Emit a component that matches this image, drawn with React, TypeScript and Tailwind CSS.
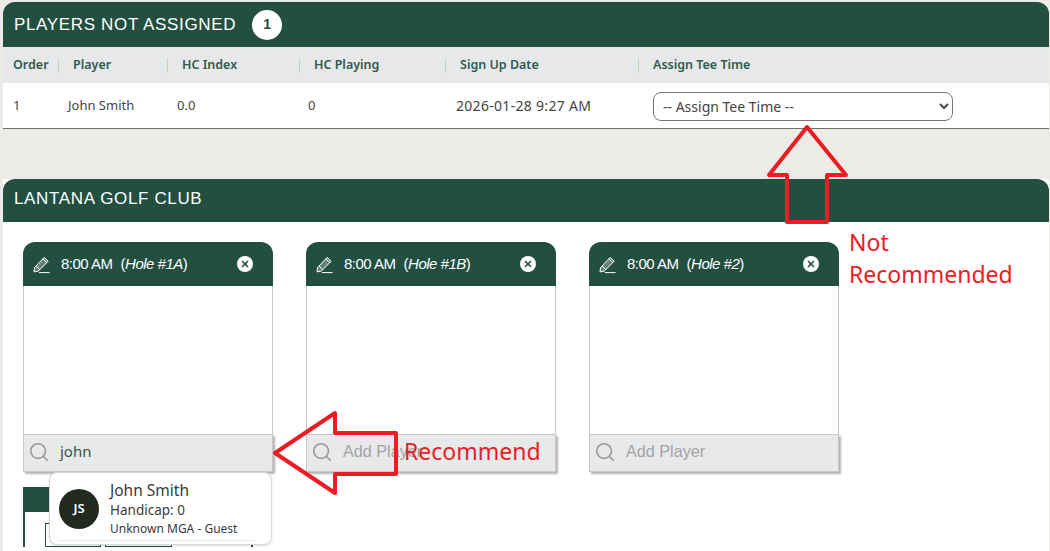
import { Search, X } from "lucide-react";

const body = { fontFamily: '"Noto Sans", sans-serif' };
const arial = { fontFamily: '"Liberation Sans", Arial, sans-serif' };

const columns = "grid grid-cols-[56px_109px_132px_146px_193px_1fr]";

function HeadCell({ label, last }: { label: string; last?: boolean }) {
  return (
    <div className={`flex h-[15px] items-center pl-[14px] ${last ? "" : "border-r border-[#c5d3bd]"}`}>
      {label}
    </div>
  );
}

function PencilIcon() {
  return (
    <svg width="19" height="19" viewBox="0 0 19 19" fill="none" stroke="#ffffff" strokeWidth="1" strokeLinejoin="round">
      <path d="M2.5 12.6 12.2 2.4l4 3.8-9.8 9.9-4.4.8z" fill="#ffffff" fillOpacity="0.3" />
      <path d="M4.2 11.2l3.6 3.5M10.8 3.9l3.9 3.7" />
      <path d="M6.8 17.6h10.8" />
    </svg>
  );
}

function TeeCard({ time, hole, query }: { time: string; hole: string; query?: string }) {
  return (
    <div className="relative w-[250px] shrink-0">
      <div className="flex h-11 items-center rounded-t-[12px] bg-[#224f40] pl-[9px] pr-[20px] text-white" style={arial}>
        <PencilIcon />
        <span className="ml-[10px] text-[15px] tracking-[-0.5px]">
          {time}
          <span className="ml-[8px]">
            (<i>{hole}</i>)
          </span>
        </span>
        <span className="ml-auto flex h-4 w-4 items-center justify-center rounded-full bg-white">
          <X size={10} strokeWidth={4} className="text-[#224f40]" />
        </span>
      </div>
      <div className="h-[148px] border-x border-[#c8c8c8] bg-white" />
      <div className="flex h-[38px] items-center border border-[#c8c8c8] bg-[#e8e9eb] pb-[3px] pl-[4px] shadow-[2px_2px_2px_rgba(0,0,0,0.3)]">
        <Search size={22} strokeWidth={1.8} className="text-[#9a9a9a]" />
        <span className={`ml-[10px] ${query ? "text-[15px] text-[#2f5a4c]" : "text-[16.2px] text-[#a3a3a3]"}`} style={query ? body : arial}>
          {query ?? "Add Player"}
        </span>
      </div>
    </div>
  );
}

export default function App() {
  return (
    <div className="relative h-[551px] w-[1050px] overflow-hidden bg-[#ecebe6] pl-[3px] pr-px pt-[2px]" style={body}>
      {/* players not assigned */}
      <section>
        <div className="flex h-[45px] items-center rounded-t-[12px] bg-[#224f40] pl-[11px] text-white">
          <h2 className="text-[17px] tracking-[0.65px]" style={arial}>PLAYERS NOT ASSIGNED</h2>
          <span className="ml-[16px] flex h-[30px] w-[30px] items-center justify-center rounded-full bg-white text-[14px] font-bold text-[#224f40]" style={arial}>
            1
          </span>
        </div>
        <div className={`${columns} h-9 items-center bg-[#e7e8ea] text-[12.5px] font-semibold text-[#2f5a4c]`}>
          <div className="flex h-[15px] items-center border-r border-[#c5d3bd] pl-[10px]">Order</div>
          <HeadCell label="Player" />
          <HeadCell label="HC Index" />
          <HeadCell label="HC Playing" />
          <HeadCell label="Sign Up Date" />
          <HeadCell label="Assign Tee Time" last />
        </div>
        <div className={`${columns} h-[46px] items-center border-b border-[#6f6f6a] bg-white pt-[2px] text-[13px] text-[#444]`}>
          <div className="pb-[2px] pl-[10px]">1</div>
          <div className="pb-[2px] pl-[9px]">John Smith</div>
          <div className="pb-[2px] pl-[9px]">0.0</div>
          <div className="pb-[2px] pl-2">0</div>
          <div className="whitespace-nowrap pb-[2px] pl-[10px] text-[14px] tracking-[0.3px]">2026-01-28 9:27 AM</div>
          <div className="pl-[14px]">
            <select className="h-[29px] w-[300px] rounded-[8px] border border-[#767676] bg-white pl-[5px] text-[14px] text-[#444]">
              <option>-- Assign Tee Time --</option>
            </select>
          </div>
        </div>
      </section>

      {/* tee times */}
      <section className="mt-[50px] h-[372px] bg-white">
        <div className="flex h-[43px] items-center rounded-t-[12px] bg-[#224f40] pb-1 pl-[11px] text-white">
          <h2 className="text-[17px] tracking-[0.65px]" style={arial}>LANTANA GOLF CLUB</h2>
        </div>
        <div className="flex gap-[33px] pl-5 pt-5">
          <TeeCard time="8:00 AM" hole="Hole #1A" query="john" />
          <TeeCard time="8:00 AM" hole="Hole #1B" />
          <TeeCard time="8:00 AM" hole="Hole #2" />
        </div>
        <div className="ml-5 mt-[15px] w-[230px] border-x-2 border-[#224f40]">
          <div className="h-[25px] bg-[#224f40]" />
          <div className="flex gap-1 pl-5 pt-[11px]">
            <div className="h-6 w-14 border border-[#224f40]" />
            <div className="h-6 w-[67px] border border-[#224f40]" />
          </div>
        </div>
      </section>

      {/* search result popover */}
      <div className="absolute left-[49px] top-[472px] flex h-[73px] w-[223px] gap-[11px] rounded-[8px] border border-[#d8d8d8] bg-white pl-[9px] pt-[16px] shadow-sm">
        <span className="flex h-10 w-10 items-center justify-center rounded-full bg-[#22291f] text-[13px] font-semibold text-white">JS</span>
        <div className="-mt-[9px] whitespace-nowrap text-[#3b3b3b]">
          <div className="text-[15.5px] leading-5">John Smith</div>
          <div className="mt-px text-[13.5px] leading-[18px]">Handicap: 0</div>
          <div className="mt-[2px] text-[12px] leading-4">Unknown MGA - Guest</div>
        </div>
        <div className="absolute bottom-[3px] left-2 right-4 border-b border-[#e8e8e8]" />
      </div>

      {/* red annotations */}
      <svg className="absolute left-0 top-0" width="1050" height="551" fill="none" stroke="#ed1c24" strokeWidth="4" strokeLinejoin="round">
        <path d="M807 127 769 175H787V222H827V175H846Z" />
        <path d="M275 453 335 413V433H396V474H335V493Z" />
      </svg>
      <div className="absolute left-[849px] top-[226px] text-[23px] leading-8 text-[#ed1c24]">
        Not
        <br />
        Recommended
      </div>
      <div className="absolute left-[404px] top-[435px] text-[23px] leading-8 text-[#ed1c24]">Recommend</div>
    </div>
  );
}
